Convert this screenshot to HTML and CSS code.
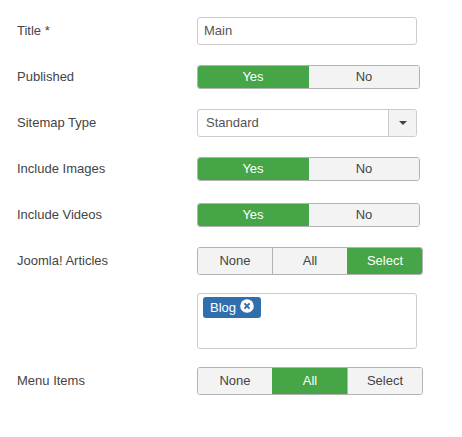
FILE: index.html
```html
<!DOCTYPE html>
<html lang="en">
<head>
    <meta charset="UTF-8">
    <title>Sitemap</title>
    <link rel="stylesheet" href="styles.css">
</head>
<body>
    <form class="form">
        <div class="row">
            <div class="label">Title *</div>
            <div class="input">Main</div>
        </div>
        <div class="row">
            <div class="label">Published</div>
            <div class="toggle">
                <div class="toggle-btn on">Yes</div>
                <div class="toggle-btn">No</div>
            </div>
        </div>
        <div class="row">
            <div class="label">Sitemap Type</div>
            <div class="select">
                <div class="select-value">Standard</div>
                <div class="select-arrow"><span class="caret"></span></div>
            </div>
        </div>
        <div class="row">
            <div class="label">Include Images</div>
            <div class="toggle">
                <div class="toggle-btn on">Yes</div>
                <div class="toggle-btn">No</div>
            </div>
        </div>
        <div class="row">
            <div class="label">Include Videos</div>
            <div class="toggle">
                <div class="toggle-btn on">Yes</div>
                <div class="toggle-btn">No</div>
            </div>
        </div>
        <div class="row">
            <div class="label">Joomla! Articles</div>
            <div class="choice">
                <div class="choice-btn">None</div>
                <div class="choice-btn">All</div>
                <div class="choice-btn on">Select</div>
            </div>
        </div>
        <div class="row row-tall">
            <div class="label"></div>
            <div class="tags">
                <span class="tag">Blog
                    <svg class="tag-x" width="14" height="14" viewBox="0 0 14 14">
                        <circle cx="7" cy="7" r="6.8" fill="#fff"/>
                        <path d="M4.4 4.4l5.2 5.2M9.6 4.4l-5.2 5.2" stroke="#2f6fad" stroke-width="2" fill="none"/>
                    </svg>
                </span>
            </div>
        </div>
        <div class="row">
            <div class="label">Menu Items</div>
            <div class="choice">
                <div class="choice-btn">None</div>
                <div class="choice-btn on">All</div>
                <div class="choice-btn">Select</div>
            </div>
        </div>
    </form>
</body>
</html>
```

FILE: styles.css
```css
body {
    margin: 0;
    background-color: #fff;
    font-family: "Liberation Sans", Arial, sans-serif;
    font-size: 13px;
    color: #444;
}
.form {
    display: flex;
    flex-direction: column;
    gap: 18px;
    padding: 17px 0 0 17px;
}
.row {
    display: flex;
    align-items: center;
    height: 28px;
}
.row-tall {
    height: 56px;
    align-items: flex-start;
}
.label {
    width: 180px;
    flex: none;
    margin-bottom: 2px;
}
.input {
    box-sizing: border-box;
    width: 220px;
    height: 28px;
    line-height: 26px;
    padding: 0 6px;
    border: 1px solid #ccc;
    border-radius: 3px;
    color: #555;
}
.toggle {
    display: flex;
    box-sizing: border-box;
    width: 223px;
    height: 24px;
    border: 1px solid #b3b3b3;
    border-radius: 3px;
    overflow: hidden;
}
.toggle-btn {
    flex: 1;
    text-align: center;
    line-height: 22px;
    background-color: #f3f3f3;
}
.toggle-btn.on {
    flex: none;
    width: 112px;
    margin: -1px 0 -1px -1px;
    padding-top: 1px;
    height: 23px;
    background-color: #46a546;
    color: #fff;
}
.select {
    display: flex;
    box-sizing: border-box;
    width: 220px;
    height: 28px;
    border: 1px solid #ccc;
    border-radius: 3px;
    overflow: hidden;
}
.select-value {
    flex: 1;
    padding: 0 8px;
    line-height: 26px;
    color: #555;
}
.select-arrow {
    display: flex;
    align-items: center;
    justify-content: center;
    width: 27px;
    border-left: 1px solid #ccc;
    background-color: #f3f3f3;
}
.caret {
    border-top: 4px solid #444;
    border-left: 4px solid transparent;
    border-right: 4px solid transparent;
}
.choice {
    display: flex;
    box-sizing: border-box;
    width: 226px;
    height: 28px;
    border: 1px solid #b3b3b3;
    border-radius: 3px;
    overflow: hidden;
}
.choice-btn {
    flex: 1;
    text-align: center;
    line-height: 26px;
    background-color: #f3f3f3;
    border-left: 1px solid #b3b3b3;
}
.choice-btn:first-child {
    border-left: none;
}
.choice-btn.on {
    background-color: #46a546;
    border-left-color: #46a546;
    color: #fff;
}
.tags {
    box-sizing: border-box;
    width: 220px;
    height: 56px;
    padding: 3px 5px;
    border: 1px solid #ccc;
    border-radius: 3px;
}
.tag {
    display: inline-flex;
    align-items: center;
    gap: 4px;
    height: 21px;
    padding: 0 7px;
    border-radius: 3px;
    background-color: #2f6fad;
    color: #fff;
}
.tag-x {
    margin-top: -3px;
}
```
